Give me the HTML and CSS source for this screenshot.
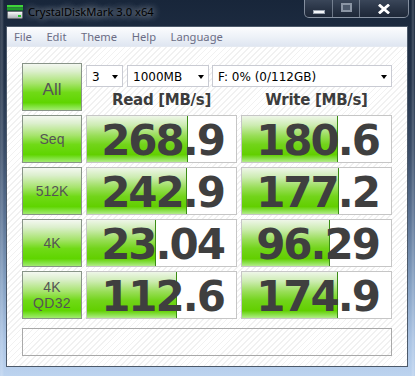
FILE: index.html
```html
<!DOCTYPE html>
<html>
<head>
<meta charset="utf-8">
<link rel="stylesheet" href="styles.css">
</head>
<body>
<div class="window">
  <div class="titlebar">
    <svg class="app-icon" width="16" height="14" viewBox="0 0 16 14">
      <defs>
        <linearGradient id="disk" x1="0" y1="0" x2="0" y2="1">
          <stop offset="0" stop-color="#ffffff"/>
          <stop offset="1" stop-color="#a9adb3"/>
        </linearGradient>
      </defs>
      <rect x="0" y="0" width="16" height="2.5" fill="#3fd43a"/>
      <rect x="0" y="3" width="16" height="2.5" fill="#1f9a2b"/>
      <rect x="0.5" y="6.5" width="15" height="7" rx="1" fill="url(#disk)" stroke="#6b6f75"/>
      <rect x="11" y="10" width="3" height="2" fill="#27c52b"/>
    </svg>
    <span class="title">CrystalDiskMark 3.0 x64</span>
    <div class="caption-buttons">
      <div class="cb cb-min"><span class="min-glyph"></span></div>
      <div class="cb cb-max"><span class="max-glyph"></span></div>
      <div class="cb cb-close">
        <svg width="12" height="10" viewBox="0 0 12 10"><path d="M2 1.5 L10 8.5 M10 1.5 L2 8.5" stroke="#ffffff" stroke-width="2.8" stroke-linecap="square"/></svg>
      </div>
    </div>
  </div>
  <div class="client">
    <nav class="menubar">
      <span class="menu-item">File</span>
      <span class="menu-item">Edit</span>
      <span class="menu-item">Theme</span>
      <span class="menu-item">Help</span>
      <span class="menu-item">Language</span>
    </nav>
    <main class="content">
      <div class="grid">
        <div class="test-btn all">All</div>
        <div class="controls">
          <div class="selects">
            <div class="select s-count"><span>3</span><i class="arrow"></i></div>
            <div class="select s-size"><span>1000MB</span><i class="arrow"></i></div>
            <div class="select s-drive"><span>F: 0% (0/112GB)</span><i class="arrow"></i></div>
          </div>
          <div class="headers">
            <div class="col-head">Read [MB/s]</div>
            <div class="col-head">Write [MB/s]</div>
          </div>
        </div>

        <div class="test-btn">Seq</div>
        <div class="result" style="--w:101px">268.9</div>
        <div class="result" style="--w:96px">180.6</div>

        <div class="test-btn">512K</div>
        <div class="result" style="--w:100px">242.9</div>
        <div class="result" style="--w:97px">177.2</div>

        <div class="test-btn">4K</div>
        <div class="result" style="--w:69px">23.04</div>
        <div class="result" style="--w:88px">96.29</div>

        <div class="test-btn two-line">4K<br>QD32</div>
        <div class="result" style="--w:90px">112.6</div>
        <div class="result" style="--w:96px">174.9</div>
      </div>
      <div class="status"></div>
    </main>
  </div>
</div>
</body>
</html>
```

FILE: styles.css
```css
* { box-sizing: border-box; }

html, body {
  margin: 0;
  padding: 0;
  width: 415px;
  height: 376px;
  overflow: hidden;
}

.window {
  width: 415px;
  height: 376px;
  display: flex;
  flex-direction: column;
  background:
    linear-gradient(to right, rgba(255,255,255,0.10) 0, rgba(255,255,255,0.18) 2px, rgba(0,0,0,0) 4px, rgba(0,0,0,0) 411px, rgba(255,255,255,0.2) 413px, rgba(0,0,0,0) 415px),
    linear-gradient(to bottom, #18263a 0%, #24344b 22%, #3a4d68 40%, #5c7495 58%, #86a2c4 76%, #aac3e3 90%, #bcd3ef 100%);
  font-family: "Noto Sans", "DejaVu Sans", sans-serif;
}

/* ---------- title bar ---------- */
.titlebar {
  height: 26px;
  flex: none;
  display: flex;
  align-items: flex-start;
}

.app-icon {
  margin: 5px 0 0 7px;
  flex: none;
}

.title {
  margin: 4px 0 0 5px;
  font-size: 11.2px;
  line-height: 16px;
  color: #000;
  text-shadow: 0 0 6px rgba(255,255,255,0.55), 0 0 10px rgba(255,255,255,0.45), 0 0 14px rgba(255,255,255,0.3);
}

.caption-buttons {
  margin-left: auto;
  margin-right: 6px;
  display: flex;
  height: 18px;
  border: 1px solid rgba(200,210,225,0.55);
  border-top: none;
  border-radius: 0 0 5px 5px;
  overflow: hidden;
  background: linear-gradient(to bottom, #3a4659 0%, #2a3547 50%, #1e2838 100%);
}

.cb {
  height: 17px;
  display: flex;
  align-items: center;
  justify-content: center;
}

.cb-min {
  width: 28px;
  border-right: 1px solid rgba(170,180,195,0.55);
}
.cb-max {
  width: 27px;
  border-right: 1px solid rgba(170,180,195,0.55);
}
.cb-close {
  width: 48px;
}

.min-glyph {
  width: 12px;
  height: 4px;
  margin-top: 6px;
  background: #f4f6f8;
  border: 1px solid #9aa3b0;
}

.max-glyph {
  width: 11px;
  height: 9px;
  border: 2px solid #8b95a4;
  background: #4d596b;
  margin-top: -2px;
}

/* ---------- client area ---------- */
.client {
  flex: none;
  height: 341px;
  margin: 0 7px 0 6px;
  border: 1px solid #4d5a6b;
  display: flex;
  flex-direction: column;
  background: #fff;
}

.menubar {
  height: 20px;
  flex: none;
  display: flex;
  gap: 14.5px;
  padding-left: 7px;
  background: linear-gradient(to bottom, #fbfcfe 0%, #eef2f8 50%, #dfe6f1 100%);
  border-bottom: 1px solid #e4e9f1;
}

.menu-item {
  font-size: 11.2px;
  line-height: 19px;
  color: #6b6d85;
}

.content {
  flex: 1;
  padding: 16px 0 0 15px;
  background: repeating-linear-gradient(135deg, #ffffff 0px, #ffffff 3px, #f1f1f1 3px, #f1f1f1 4.2px);
}

.grid {
  display: grid;
  grid-template-columns: 60px 151px 151px;
  grid-auto-rows: 48px;
  column-gap: 4px;
  row-gap: 4px;
}

.test-btn {
  border: 1px solid #889488;
  background: linear-gradient(to bottom, #f4f8f1 0%, #dcefcd 16%, #a7e46e 42%, #70da16 62%, #5fd500 84%, #7fe23a 92%, #a2ea70 100%);
  display: flex;
  align-items: center;
  justify-content: center;
  text-align: center;
  font-family: "Liberation Sans", "DejaVu Sans", sans-serif;
  font-size: 14px;
  letter-spacing: 0;
  color: #555555;
}

.test-btn.all {
  font-size: 17px;
  padding-top: 5px;
}

.test-btn.two-line {
  font-size: 14px;
  line-height: 16px;
  letter-spacing: 0.3px;
}

.controls {
  grid-column: 2 / 4;
  display: flex;
  flex-direction: column;
}

.selects {
  margin-top: 2px;
  height: 22px;
  display: flex;
}

.select {
  height: 22px;
  border: 1px solid #c9cbd3;
  background: #fff;
  display: flex;
  align-items: center;
  padding: 1px 4px 0 5px;
  font-family: "DejaVu Sans", sans-serif;
  font-size: 12px;
  color: #000;
}

.select span { flex: 1; }

.s-count { width: 37px; }
.s-size { width: 82px; margin-left: 4px; }
.s-drive { width: 180px; margin-left: 3px; }

.arrow {
  width: 0;
  height: 0;
  border-left: 3.5px solid transparent;
  border-right: 3.5px solid transparent;
  border-top: 4px solid #000;
  margin-top: 1px;
}

.headers {
  display: grid;
  grid-template-columns: 151px 151px;
  column-gap: 4px;
  padding-top: 3px;
}

.col-head {
  text-align: center;
  font-family: "DejaVu Sans", sans-serif;
  font-weight: bold;
  font-size: 15px;
  line-height: 21px;
  letter-spacing: -0.3px;
  color: #3c3c3c;
}

.result {
  border: 1px solid #c6c6c6;
  background-color: #fff;
  background-image:
    linear-gradient(to left, #3a8c14 0, #3a8c14 1px, rgba(0,0,0,0) 1px),
    linear-gradient(to bottom, #eef6e8 0%, #cdecb2 20%, #9ade5a 42%, #72d41a 62%, #62cf00 84%, #86df44 92%, #b3ec8a 100%);
  background-size: var(--w) 100%, var(--w) 100%;
  background-repeat: no-repeat;
  text-align: right;
  padding: 5px 12px 0 0;
  font-family: "DejaVu Sans", sans-serif;
  font-weight: bold;
  font-size: 42px;
  line-height: 40px;
  letter-spacing: -2px;
  color: #3f3f3f;
}

.status {
  margin-top: 9px;
  width: 370px;
  height: 28px;
  border: 1px solid #a9a9a9;
}
```
